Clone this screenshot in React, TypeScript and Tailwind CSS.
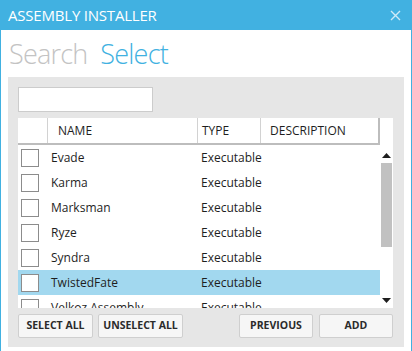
import React from 'react'

const rows = ['Evade', 'Karma', 'Marksman', 'Ryze', 'Syndra', 'TwistedFate', 'Velkoz Assembly']

function Checkbox() {
  return <div className="w-[18px] h-[18px] border border-[#8c8c8c] bg-white" />
}

function Button({ label, width }: { label: string; width: string }) {
  return (
    <button
      className={`${width} h-[24px] rounded-[2px] border border-[#cfcfcf] bg-[#f6f6f6] text-[10.5px] font-bold text-[#2b2b2b] flex items-center justify-center`}
    >
      {label}
    </button>
  )
}

export default function App() {
  return (
    <div className="w-[412px] h-[351px] bg-white border-x border-[#41b1e1] flex flex-col font-['Open_Sans','Noto_Sans',sans-serif] overflow-hidden">
      {/* Title bar */}
      <div className="h-[30px] bg-[#41b1e1] flex items-center justify-between pl-[7px] pr-[10px] shrink-0">
        <span className="text-[15px] text-white tracking-[-0.2px]">ASSEMBLY INSTALLER</span>
        <svg width="11" height="11" viewBox="0 0 11 11" className="mt-[1px]">
          <path d="M1 1L10 10M10 1L1 10" stroke="#cfeaf7" strokeWidth="1.4" />
        </svg>
      </div>

      {/* Tabs */}
      <div className="h-[47px] flex items-end gap-[13px] pl-[8px] pb-[10px] shrink-0 text-[27px] font-light leading-none tracking-[-0.8px]">
        <span className="text-[#c3c3c3]">Search</span>
        <span className="text-[#41b1e1]">Select</span>
      </div>

      {/* Panel */}
      <div className="mx-[7px] h-[270px] bg-[#e6e6e6] pt-[10px] pl-[10px] pr-[11px] flex flex-col">
        <input className="w-[135px] h-[25px] bg-white border border-[#cccccc] outline-none shrink-0" />

        <div className="mt-[6px] w-[375px] h-[190px] bg-white flex flex-col">
          {/* Header */}
          <div className="flex h-[27px] shrink-0">
            <div className="w-[362px] flex border-b-2 border-r-2 border-[#bdbdbd] text-[12px] text-[#1e1e1e]">
              <div className="w-[30px] border-r border-[#d2d2d2]" />
              <div className="w-[150px] border-r border-[#d2d2d2] flex items-center pl-[10px]">NAME</div>
              <div className="w-[63px] border-r border-[#d2d2d2] flex items-center pl-[4px]">TYPE</div>
              <div className="flex-1 flex items-center pl-[9px]">DESCRIPTION</div>
            </div>
          </div>

          {/* Body */}
          <div className="flex flex-1 overflow-hidden">
            <div className="w-[362px] flex flex-col overflow-hidden">
              {rows.map((name) => (
                <div
                  key={name}
                  className={`flex items-center h-[25px] shrink-0 text-[12px] text-[#1e1e1e] ${name === 'TwistedFate' ? 'bg-[#a2d8ef]' : ''}`}
                >
                  <div className="w-[30px] pl-[3px]">
                    <Checkbox />
                  </div>
                  <div className="w-[150px] pl-[3px]">{name}</div>
                  <div className="w-[63px] pl-[3px]">Executable</div>
                </div>
              ))}
            </div>
            {/* Scrollbar */}
            <div className="w-[13px] flex flex-col items-center pt-[8px] pb-[5px]">
              <svg width="9" height="5" viewBox="0 0 9 5">
                <path d="M0 5L4.5 0L9 5Z" fill="#1e1e1e" />
              </svg>
              <div className="mt-[5px] w-[11px] h-[84px] bg-[#c1c1c1]" />
              <div className="flex-1" />
              <svg width="9" height="5" viewBox="0 0 9 5">
                <path d="M0 0L9 0L4.5 5Z" fill="#1e1e1e" />
              </svg>
            </div>
          </div>
        </div>

        {/* Buttons */}
        <div className="mt-[6px] w-[375px] flex">
          <Button label="SELECT ALL" width="w-[75px]" />
          <div className="ml-[5px]">
            <Button label="UNSELECT ALL" width="w-[85px]" />
          </div>
          <div className="flex-1" />
          <Button label="PREVIOUS" width="w-[74px]" />
          <div className="ml-[6px]">
            <Button label="ADD" width="w-[74px]" />
          </div>
        </div>
      </div>
    </div>
  )
}
